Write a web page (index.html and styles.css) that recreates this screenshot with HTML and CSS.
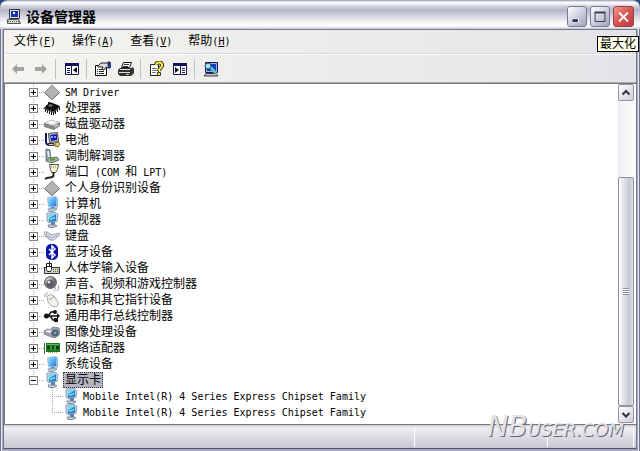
FILE: index.html
```
<!DOCTYPE html>
<html lang="zh-CN">
<head>
<meta charset="utf-8">
<title>设备管理器</title>
<link rel="stylesheet" href="styles.css">
</head>
<body>
<svg class="defs" aria-hidden="true">
  <defs>
    <linearGradient id="scr" x1="0" y1="0" x2="1" y2="1"><stop offset="0" stop-color="#b4e8ff"/><stop offset=".5" stop-color="#58b4f4"/><stop offset="1" stop-color="#1d70d0"/></linearGradient>
    <radialGradient id="ball" cx=".35" cy=".3"><stop offset="0" stop-color="#eee"/><stop offset="1" stop-color="#666a72"/></radialGradient>
  </defs>
  <symbol id="diamond" viewBox="0 0 16 16"><path d="M8 .5L15.500 8 8 15.500.5 8z" fill="#b4b4b4"/><path d="M1 8l7-7 7 7" fill="none" stroke="#999"/><path d="M.5 8.500L8 15.500l7.500-7" fill="none" stroke="#555"/></symbol>
  <symbol id="chip" viewBox="0 0 16 16"><path d="M6 2l10 4-6 6-10-4z" fill="#111"/><path d="M0 8v1l10 4 6-6V6l-6 6z" fill="#333"/><path d="M1.500 9v3M3.500 10v3M5.500 11v3M7.500 12v3M9.500 12v3M11.500 11v3M13.500 9v3M15.500 7v3M2.500 5v2M4.500 2v3" stroke="#111"/><path d="M6 4l3 1-2 2-3-1z" fill="#777"/></symbol>
  <symbol id="disk" viewBox="0 0 16 16"><path d="M0 7l7-3 9 2v4l-6 4-10-3z" fill="#858585"/><path d="M0 7l7-3 9 2-6 4z" fill="#d4d4d4"/><path d="M3 6.500l4-1.500 5 1.200-4 2z" fill="#fff"/><path d="M11 11l3-2" stroke="#fff"/></symbol>
  <symbol id="battery" viewBox="0 0 16 16"><path d="M4.500 1.500l9-1 1 9-9 1z" fill="#c8c8d8" stroke="#444"/><path d="M6 3l7-1v6l-6 1z" fill="#1616b0"/><path d="M7 4h2v2H7z" fill="#3de"/><path d="M10 4h2v2h-2z" fill="#b48be0"/><path d="M2 1v9q0 3 4 3h4" fill="none" stroke="#15155e" stroke-width="2"/><path d="M4 11.500h6v2H5z" fill="#ccc" stroke="#333"/><path d="M11 11l3-1 2 2-2 3-3-1z" fill="#d9cf5a" stroke="#776e28"/></symbol>
  <symbol id="modem" viewBox="0 0 16 16"><path d="M2 1l4 1 1 9-5 2z" fill="#8a98a8" stroke="#6b7786"/><path d="M4 3l1 6" stroke="#dfe4ea" stroke-width="2"/><path d="M5 10l8-1 2 3-7 3-6-2z" fill="#9fb4a0" stroke="#687868"/><path d="M6 12l5-1" stroke="#4ea238" stroke-width="2"/></symbol>
  <symbol id="port" viewBox="0 0 16 16"><path d="M5.500.5h9l-1 5-2 3h-4l-1-3z" fill="#f3f0c4" stroke="#555"/><path d="M7 3h6" stroke="#777" stroke-dasharray="1 1"/><path d="M9.500 8v3c0 4-5 1-8.500 4" fill="none" stroke="#222" stroke-width="2"/></symbol>
  <symbol id="computer" viewBox="0 0 16 16"><path d="M12 1l2 1v9l-2 1z" fill="#9db4d0"/><path d="M3.500 1.500l9-1v10l-8 .5z" fill="url(#scr)" stroke="#a3c2e2"/><path d="M7 11h4v2H7z" fill="#6f86ac"/><path d="M4 13l7-1 2 1-4 2.500H5z" fill="#c2c8d6" stroke="#8993a5"/></symbol>
  <symbol id="monitor" viewBox="0 0 16 16"><path d="M3 1l9-.500 2 2-1 7-8 1.500-2-2z" fill="#bcd2e4" stroke="#8aa4c0"/><path d="M5 2h7v7l-7 1z" fill="#2589cd"/><path d="M5 2h7L5 7z" fill="#79d6ee"/><path d="M6 7l5-2v1L6 8z" fill="#d5f4fb"/><path d="M7 10h4v3H7z" fill="#6c80a0"/><path d="M4 13h8l1 1-4 1.500H5z" fill="#ccd3df" stroke="#78869e"/></symbol>
  <symbol id="keyboard" viewBox="0 0 16 16"><path d="M0 4l3 0 5 3 7-2 1 2-6 5-4 0-5-4z" fill="#d6d9e6" stroke="#9fa4b8"/><path d="M2 6l6 4 6-3M2 8l5 3" fill="none" stroke="#7e839b" stroke-dasharray="1 1"/></symbol>
  <symbol id="bluetooth" viewBox="0 0 16 16"><rect x="2" width="12" height="16" rx="5" fill="#0713a8"/><path d="M5 5l6 6-3 3V2l3 3-6 6" fill="none" stroke="#fff" stroke-width="1.500"/></symbol>
  <symbol id="hid" viewBox="0 0 16 16"><path d="M.5 7.500h15v6H.5z" fill="#d7d3bf" stroke="#333"/><path d="M9 9.500h6M9 11.500h6" stroke="#555" stroke-dasharray="1 1"/><path d="M2.500 3.500h5v6l-1 2h-3l-1-2z" fill="#fff" stroke="#222"/><path d="M2 6.500h6M5.500 6V1" stroke="#222"/></symbol>
  <symbol id="speaker" viewBox="0 0 16 16"><circle cx="6.500" cy="6.500" r="6" fill="url(#ball)" stroke="#666"/><circle cx="6" cy="7" r="3.500" fill="#555b66"/><circle cx="5" cy="6" r="1.500" fill="#ddd"/><path d="M11 11q1 2-1 4M14 9q2 3-1 6" fill="none" stroke="#9aa2d0"/></symbol>
  <symbol id="mouse" viewBox="0 0 16 16"><path d="M3 4q4-3 7 0l4 6q1 4-3 5-4 0-7-5z" fill="#f1f1ee" stroke="#aaa"/><path d="M5 7q3 1 5-3M1 5Q0 1 4 1" fill="none" stroke="#999"/></symbol>
  <symbol id="usb" viewBox="0 0 16 16"><path d="M2 8h12M4 8l3-4h4M6 8l3 4h3" fill="none" stroke="#111" stroke-width="1.500"/><circle cx="2.500" cy="8" r="2.500" fill="#111"/><circle cx="11" cy="4" r="2" fill="#111"/><path d="M10 10h4v4h-4zM13 5l3 3-3 3z" fill="#111"/></symbol>
  <symbol id="camera" viewBox="0 0 16 16"><path d="M0 7l4-2 2 1 3-3 6 1 1 6-5 4-6-2-5-2z" fill="#9da3ad" stroke="#81868f"/><path d="M1 7l4-1 4 1-4 2z" fill="#eee"/><circle cx="11" cy="9" r="3.500" fill="#555e6c"/><circle cx="11" cy="9" r="1.500" fill="#4eb3df"/></symbol>
  <symbol id="network" viewBox="0 0 16 16"><path d="M.5 3v11" stroke="#555"/><path d="M2 3h14v9H2z" fill="#187a20"/><path d="M3 6h3v3H3zM8 6h2v3H8zM12 6h3v3h-3z" fill="#083d10"/><path d="M3 4.500h12M7 6v4M11 6v4" stroke="#69b960"/><path d="M4 12.500h9" stroke="#bca638" stroke-dasharray="1 1"/></symbol>
  <symbol id="pc" viewBox="0 0 16 16"><path d="M3.500.5h10v9h-10z" fill="#dedee8" stroke="#333"/><path d="M5 2h7v6H5z" fill="#1634b0"/><path d="M7 3h2v2H7z" fill="#fff"/><path d="M1.500 10.500h11l2 4h-13z" fill="#ddd" stroke="#555"/><path d="M2 12.500h11" stroke="#555" stroke-dasharray="1 1"/></symbol>
  <symbol id="back" viewBox="0 0 16 16"><path d="M2 8l5-5v3h7v4H7v3z" fill="#a3a3a3"/></symbol>
  <symbol id="forward" viewBox="0 0 16 16"><path d="M14 8L9 3v3H2v4h7v3z" fill="#a3a3a3"/></symbol>
  <symbol id="tree-left" viewBox="0 0 16 16"><path d="M1.500 2.500h13v11h-13z" fill="#fff" stroke="#15155e"/><path d="M1 2h14v3H1zM7 5h1v9H7z" fill="#15155e"/><path d="M3 7.500h3M3 9.500h3M3 11.500h3" stroke="#15155e"/><path d="M9 9l4-3v6z" fill="#111"/></symbol>
  <symbol id="tree-right" viewBox="0 0 16 16"><path d="M1.500 2.500h13v11h-13z" fill="#fff" stroke="#15155e"/><path d="M1 2h14v3H1zM8 5h1v9H8z" fill="#15155e"/><path d="M10 7.500h3M10 9.500h3M10 11.500h3" stroke="#15155e"/><path d="M7 9L3 6v6z" fill="#111"/></symbol>
  <symbol id="props" viewBox="0 0 16 16"><path d="M.5 4.500h11v10H.5z" fill="#fff" stroke="#111"/><path d="M2 8.500h1M4 8.500h5M2 10.500h1M4 10.500h5M2 12.500h1M4 12.500h5" stroke="#222"/><path d="M3 5l3-3h6l1-1h2v6h-2l-2-1-2 3-2-1 1-2H3z" fill="#ddd" stroke="#222"/><path d="M12 1h4v6h-3z" fill="#2e3b88"/></symbol>
  <symbol id="printer" viewBox="0 0 16 16"><path d="M5.500 1.500h8l-2 5h-8z" fill="#fff" stroke="#111"/><path d="M6 3.500h5M5 5.500h5" stroke="#333"/><path d="M2 7h11l2-1 1 2v4l-3 3H2l-2-2V9z" fill="#333"/><path d="M2 8.500h10M1 11.500h11" stroke="#ddd"/><path d="M8 13.500h3" stroke="#e4cf34"/></symbol>
  <symbol id="help" viewBox="0 0 16 16"><path d="M1.500 3.500h8v11h-8z" fill="#fff" stroke="#222"/><path d="M3 7.500h5M3 9.500h5M3 11.500h4" stroke="#777"/><path d="M7 4c1-4 7-3 6 1-1 2-3 2-3 5" fill="none" stroke="#333" stroke-width="4"/><path d="M7 4c1-4 7-3 6 1-1 2-3 2-3 5" fill="none" stroke="#ffec35" stroke-width="2"/><path d="M8.500 11.500h3v3h-3z" fill="#ffec35" stroke="#333"/></symbol>
  <symbol id="scan" viewBox="0 0 16 16"><path d="M2.500 1.500h12v10h-12z" fill="#aaaee0" stroke="#15155e"/><path d="M4 3h9v7H4z" fill="#1438c0"/><path d="M3 12.500h10l2 2.500H1z" fill="#bbb" stroke="#444"/><path d="M7 6l6 6" stroke="#57c6d0" stroke-width="3"/><circle cx="5" cy="5" r="3" fill="#9be8ee" stroke="#345"/></symbol>
</svg>
<main class="window">
  <header class="titlebar">
    <svg class="icon"><use href="#pc"/></svg>
    <h1>设备管理器</h1>
    <button class="caption" aria-label="最小化"><svg viewBox="0 0 20 20"><path d="M5 14h7" stroke="#fff" stroke-width="4"/><path d="M5 14h6" stroke="#292c48" stroke-width="3"/></svg></button>
    <button class="caption" aria-label="最大化"><svg viewBox="0 0 20 20"><path d="M4.500 5h11v10h-11z" fill="none" stroke="#30334e"/><path d="M4 5h12" stroke="#30334e" stroke-width="2"/></svg></button>
    <button class="caption close" aria-label="关闭"><svg viewBox="0 0 20 20"><path d="M5 5l10 10M15 5L5 15" stroke="#fff" stroke-width="2"/></svg></button>
  </header>
  <div class="frame">
    <nav class="menubar">
      <button>文件<span class="mono">(<u>F</u>)</span></button>
      <button>操作<span class="mono">(<u>A</u>)</span></button>
      <button>查看<span class="mono">(<u>V</u>)</span></button>
      <button>帮助<span class="mono">(<u>H</u>)</span></button>
    </nav>
    <div class="toolbar">
      <button aria-label="后退" disabled><svg class="icon"><use href="#back"/></svg></button>
      <button aria-label="前进" disabled><svg class="icon"><use href="#forward"/></svg></button>
      <i class="sep"></i>
      <button aria-label="显示树"><svg class="icon"><use href="#tree-left"/></svg></button>
      <i class="sep"></i>
      <button aria-label="属性"><svg class="icon"><use href="#props"/></svg></button>
      <button aria-label="打印"><svg class="icon"><use href="#printer"/></svg></button>
      <i class="sep"></i>
      <button aria-label="帮助"><svg class="icon"><use href="#help"/></svg></button>
      <button aria-label="操作窗格"><svg class="icon"><use href="#tree-right"/></svg></button>
      <i class="sep"></i>
      <button aria-label="扫描硬件"><svg class="icon"><use href="#scan"/></svg></button>
    </div>
    <section class="content">
      <ul class="tree">
        <li><div class="row"><button class="exp" aria-label="展开"></button><svg class="icon"><use href="#diamond"/></svg><span class="label"><span class="mono">SM Driver</span></span></div></li>
        <li><div class="row"><button class="exp" aria-label="展开"></button><svg class="icon"><use href="#chip"/></svg><span class="label">处理器</span></div></li>
        <li><div class="row"><button class="exp" aria-label="展开"></button><svg class="icon"><use href="#disk"/></svg><span class="label">磁盘驱动器</span></div></li>
        <li><div class="row"><button class="exp" aria-label="展开"></button><svg class="icon"><use href="#battery"/></svg><span class="label">电池</span></div></li>
        <li><div class="row"><button class="exp" aria-label="展开"></button><svg class="icon"><use href="#modem"/></svg><span class="label">调制解调器</span></div></li>
        <li><div class="row"><button class="exp" aria-label="展开"></button><svg class="icon"><use href="#port"/></svg><span class="label">端口<span class="mono"> (COM </span>和<span class="mono"> LPT)</span></span></div></li>
        <li><div class="row"><button class="exp" aria-label="展开"></button><svg class="icon"><use href="#diamond"/></svg><span class="label">个人身份识别设备</span></div></li>
        <li><div class="row"><button class="exp" aria-label="展开"></button><svg class="icon"><use href="#computer"/></svg><span class="label">计算机</span></div></li>
        <li><div class="row"><button class="exp" aria-label="展开"></button><svg class="icon"><use href="#monitor"/></svg><span class="label">监视器</span></div></li>
        <li><div class="row"><button class="exp" aria-label="展开"></button><svg class="icon"><use href="#keyboard"/></svg><span class="label">键盘</span></div></li>
        <li><div class="row"><button class="exp" aria-label="展开"></button><svg class="icon"><use href="#bluetooth"/></svg><span class="label">蓝牙设备</span></div></li>
        <li><div class="row"><button class="exp" aria-label="展开"></button><svg class="icon"><use href="#hid"/></svg><span class="label">人体学输入设备</span></div></li>
        <li><div class="row"><button class="exp" aria-label="展开"></button><svg class="icon"><use href="#speaker"/></svg><span class="label">声音、视频和游戏控制器</span></div></li>
        <li><div class="row"><button class="exp" aria-label="展开"></button><svg class="icon"><use href="#mouse"/></svg><span class="label">鼠标和其它指针设备</span></div></li>
        <li><div class="row"><button class="exp" aria-label="展开"></button><svg class="icon"><use href="#usb"/></svg><span class="label">通用串行总线控制器</span></div></li>
        <li><div class="row"><button class="exp" aria-label="展开"></button><svg class="icon"><use href="#camera"/></svg><span class="label">图像处理设备</span></div></li>
        <li><div class="row"><button class="exp" aria-label="展开"></button><svg class="icon"><use href="#network"/></svg><span class="label">网络适配器</span></div></li>
        <li><div class="row"><button class="exp" aria-label="展开"></button><svg class="icon"><use href="#computer"/></svg><span class="label">系统设备</span></div></li>
        <li><div class="row"><button class="exp open" aria-label="折叠"></button><svg class="icon"><use href="#monitor"/></svg><span class="label selected">显示卡</span></div>
          <ul class="children">
            <li class="row"><svg class="icon"><use href="#monitor"/></svg><span class="label"><span class="mono">Mobile Intel(R) 4 Series Express Chipset Family</span></span></li>
            <li class="row"><svg class="icon"><use href="#monitor"/></svg><span class="label"><span class="mono">Mobile Intel(R) 4 Series Express Chipset Family</span></span></li>
          </ul>
        </li>
      </ul>
      <div class="scrollbar">
        <button class="arrow" aria-label="向上"><svg viewBox="0 0 14 15"><path d="M3.500 9.500L7 6l3.500 3.500" fill="none" stroke="#30343f" stroke-width="2"/></svg></button>
        <div class="before"></div>
        <div class="thumb"><i class="grip"></i></div>
        <button class="arrow" aria-label="向下"><svg viewBox="0 0 14 15"><path d="M3.500 6L7 9.500 10.500 6" fill="none" stroke="#30343f" stroke-width="2"/></svg></button>
      </div>
    </section>
    <footer class="status"><span></span><span></span><span></span></footer>
  </div>
  <div class="tooltip" role="tooltip">最大化</div>
  <div class="watermark"><b>NB</b>USER.COM</div>
</main>
</body>
</html>
```
FILE: styles.css
```
* { box-sizing: border-box; }
body {
  margin: 0;
  background: #2c4f86;
  color: #000;
  font: 12px/16px "Liberation Sans", "Noto Sans CJK SC", sans-serif;
}
button { margin: 0; padding: 0; border: 0; background: none; color: inherit; font: inherit; }
ul { margin: 0; padding: 0; list-style: none; }
.defs { position: absolute; width: 0; height: 0; }
.icon { display: block; flex: none; width: 16px; height: 16px; }
.mono { font-family: "DejaVu Sans Mono", monospace; font-size: 10px; white-space: pre; }

.window {
  position: relative;
  display: flex;
  flex-direction: column;
  min-height: 100vh;
  padding: 1px 3px 3px;
  border-radius: 8px 8px 0 0;
  background: linear-gradient(90deg, #70748c 0 1px, #e8e8f2 1px 2px, #a9acc0 2px calc(100% - 2px), #e8e8f2 calc(100% - 2px) calc(100% - 1px), #70748c calc(100% - 1px));
}
.titlebar {
  display: flex;
  align-items: center;
  gap: 3px;
  height: 28px;
  margin: 0 -3px;
  padding: 3px 6px 0;
  border-radius: 7px 7px 0 0;
  background: linear-gradient(#d4d5e2 0, #fff 2px, #d3d4e1 5px, #b2b4c8 9px, #c9cad8 13px, #f8f8fb 22px, #fff 25px, #c5c7d4);
}
.titlebar h1 { flex: 1; margin: 0; padding-left: 1px; font-size: 14px; line-height: 20px; font-weight: bold; }
.caption {
  width: 20px;
  height: 21px;
  border: 1px solid #777b98;
  border-radius: 3px;
  background: linear-gradient(135deg, #fff, #d3d5e2 45%, #9fa2b9);
}
.caption svg { display: block; width: 18px; height: 18px; }
.close { width: 21px; border-color: #9c4148; background: linear-gradient(135deg, #ef9c92, #d9524e 50%, #b83c41); }
.close svg { width: 19px; }

.frame { display: flex; flex: 1; flex-direction: column; border: 1px solid #74778c; border-bottom-color: #50546f; background: #efeff0; }
.menubar { display: flex; gap: 16px; height: 24px; padding: 0 10px; border-bottom: 1px solid #d6d6da; background: linear-gradient(90deg, #f5f4ef, #e4e4e8); }
.toolbar { display: flex; align-items: center; height: 29px; padding: 0 2px; border-top: 1px solid #fff; border-bottom: 1px solid #aaa; background: linear-gradient(90deg, #f5f4ef, #e4e4e8); }
.toolbar button { display: grid; place-items: center; width: 23px; height: 24px; }
.sep { width: 1px; height: 20px; margin: 0 4px 0 3px; background: #bfbfc4; }

.content { display: flex; flex: 1; border: 1px solid #777; border-width: 1px 0 1px 1px; background: #fff; }
.tree { flex: 1; padding: 0 0 4px 28px; background: repeating-linear-gradient(#aaa 0 1px, #fff 1px 2px) 28px 0 / 1px 296px no-repeat; }
.row { display: flex; align-items: center; height: 16px; }
.tree > li > .row { margin-left: -4px; background: repeating-linear-gradient(90deg, #aaa 0 1px, #fff 1px 2px) 10px 8px / 5px 1px no-repeat; }
.exp {
  flex: none;
  width: 9px;
  height: 9px;
  margin-right: 6px;
  border: 1px solid #848484;
  background: linear-gradient(#000, #000) center / 5px 1px no-repeat, linear-gradient(#000, #000) center / 1px 5px no-repeat, #fff;
}
.exp.open { background: linear-gradient(#000, #000) center / 5px 1px no-repeat, #fff; }
.label { margin-left: 3px; padding: 0 2px; white-space: nowrap; }
.selected { background: #b4b4be; outline: 1px dotted #333; outline-offset: -1px; }
.children { margin-left: 19px; background: repeating-linear-gradient(#aaa 0 1px, #fff 1px 2px) 0 0 / 1px 25px no-repeat; }
.children .row::before { content: ""; width: 11px; border-top: 1px dotted #aaa; }
.children .label { margin-left: 2px; }

.scrollbar { display: flex; flex-direction: column; width: 18px; padding: 0 2px 1px 0; background: linear-gradient(90deg, #eeeef3, #fff); }
.arrow { width: 16px; height: 17px; border: 1px solid #9497a5; border-radius: 2px; background: linear-gradient(135deg, #fff, #cdced9); }
.arrow svg { display: block; width: 14px; height: 15px; }
.before { flex: 1; }
.thumb { display: grid; flex: 3; place-items: center; width: 16px; border: 1px solid #8c8e9b; border-radius: 2px; background: linear-gradient(90deg, #fff 1px, #e9e9f0 3px, #c6c7d6 11px, #e2e2eb); }
.grip { width: 6px; height: 7px; background: repeating-linear-gradient(#8b8d9b 0 1px, #fff 1px 2px); }

.status { display: flex; height: 23px; padding: 2px 2px 1px; background: linear-gradient(#cfcfd5, #efeff4 3px, #dcdce4 12px, #c8c8d2); }
.status span { border-right: 1px solid #fff; }
.status span:nth-child(1) { flex: 409; }
.status span:nth-child(2) { flex: 133; }
.status span:nth-child(3) { flex: 85; }

.tooltip { position: absolute; top: 36px; right: 1px; padding: 0 2px; border: 1px solid #000; background: #ffffe7; line-height: 14px; }
.watermark {
  position: absolute;
  right: 16px;
  bottom: 11px;
  color: #e2e2e8;
  font: italic 18px/22px "DejaVu Sans", sans-serif;
  text-shadow: 1px 1px 0 #66676e;
}
.watermark b { font-size: 28px; font-weight: normal; }
```
